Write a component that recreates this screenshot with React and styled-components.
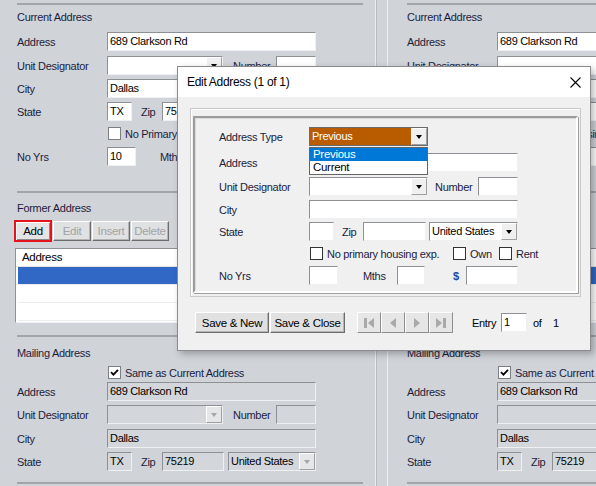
import React from 'react';
import styled, { createGlobalStyle } from 'styled-components';

const GlobalStyle = createGlobalStyle`
  html, body {
    margin: 0;
    padding: 0;
  }
  body {
    background: #d0d4d9;
    font-family: "Liberation Sans", Arial, sans-serif;
    font-size: 11px;
    letter-spacing: -0.3px;
    color: #1c1c3c;
  }
`;

const Screen = styled.div`
  position: relative;
  display: flex;
  width: 596px;
  height: 486px;
  overflow: hidden;
`;

const Column = styled.div`
  flex: 0 0 375px;
  box-sizing: border-box;
  padding-left: 17px;
  display: flex;
  flex-direction: column;
`;

const ColumnGap = styled.div`
  flex: 0 0 13px;
  box-sizing: border-box;
  margin-right: 2px;
  border-left: 1px solid #eceef1;
  border-right: 1px solid #eceef1;
  box-shadow: inset 1px 0 0 #b9bdc2;
`;

const Rule = styled.div`
  flex-shrink: 0;
  width: 346px;
  height: 2px;
  margin-top: ${(p) => p.$mt}px;
  background: #a2a5a9;
`;

const SectionTitle = styled.div`
  flex-shrink: 0;
  height: 14px;
  line-height: 14px;
  margin-top: ${(p) => p.$mt}px;
  white-space: nowrap;
`;

const FieldRow = styled.div`
  flex-shrink: 0;
  position: relative;
  display: flex;
  align-items: center;
  height: ${(p) => p.$h || 19}px;
  margin-top: ${(p) => p.$mt}px;
  white-space: nowrap;
`;

const Label = styled.span`
  flex-shrink: 0;
  width: ${(p) => p.$w || 90}px;
  margin-left: ${(p) => p.$ml || 0}px;
  color: ${(p) => p.$color || 'inherit'};
  font-weight: ${(p) => (p.$bold ? 'bold' : 'normal')};
`;

const TextBox = styled.div`
  flex-shrink: 0;
  box-sizing: border-box;
  width: ${(p) => p.$w}px;
  height: 19px;
  margin-left: ${(p) => p.$ml || 0}px;
  padding: 0 2px;
  line-height: 17px;
  color: #000;
  background: ${(p) => (p.$disabled ? '#d3d6da' : '#fff')};
  border: 1px solid;
  border-color: #8d9095 #eef0f2 #eef0f2 #8d9095;
  overflow: hidden;
`;

const Combo = styled(TextBox)`
  position: relative;
  display: flex;
  padding: 0 0 0 2px;
  overflow: visible;
  background: ${(p) => (p.$accent ? '#b95c00' : p.$disabled ? '#d3d6da' : '#fff')};
  color: ${(p) => (p.$accent ? '#fff' : '#000')};
  border-color: ${(p) => (p.$accent ? '#6b6b6b' : '#8d9095 #eef0f2 #eef0f2 #8d9095')};
`;

const ComboText = styled.span`
  flex: 1;
  overflow: hidden;
`;

const DropButton = styled.span`
  flex: 0 0 16px;
  box-sizing: border-box;
  display: flex;
  align-items: center;
  justify-content: center;
  background: ${(p) => (p.$disabled ? '#e4e6e8' : '#f0f0f0')};
  border: 1px solid;
  border-color: #ffffff #a0a0a0 #a0a0a0 #ffffff;

  &::after {
    content: '';
    border-left: 3.5px solid transparent;
    border-right: 3.5px solid transparent;
    border-top: 4px solid ${(p) => (p.$disabled ? '#a6a6a6' : '#000')};
  }
`;

const DropList = styled.div`
  position: absolute;
  top: 19px;
  left: -1px;
  right: -1px;
  box-sizing: border-box;
  border: 1px solid #646464;
  background: #fff;
  z-index: 2;
`;

const DropItem = styled.div`
  height: 13px;
  line-height: 13px;
  padding-left: 3px;
  color: ${(p) => (p.$active ? '#fff' : '#000')};
  background: ${(p) => (p.$active ? '#0078d7' : '#fff')};
  font-size: 11.5px;
`;

const CheckBox = styled.span`
  flex-shrink: 0;
  box-sizing: border-box;
  display: flex;
  align-items: center;
  justify-content: center;
  width: 13px;
  height: 13px;
  margin-left: ${(p) => p.$ml || 0}px;
  background: #fff;
  border: 1px solid ${(p) => p.$edge || '#333'};
`;

const CheckText = styled.span`
  flex-shrink: 0;
  width: ${(p) => (p.$w ? `${p.$w}px` : 'auto')};
  margin-left: 4px;
`;

const ClassicButton = styled.button`
  flex-shrink: 0;
  box-sizing: border-box;
  width: ${(p) => p.$w}px;
  height: ${(p) => p.$h || 20}px;
  margin-left: ${(p) => p.$ml || 0}px;
  padding: 0;
  font: inherit;
  font-size: 11.5px;
  letter-spacing: inherit;
  color: ${(p) => (p.$disabled ? '#a3a3a3' : '#000')};
  background: ${(p) => (p.$disabled ? '#dfe1e3' : '#e1e1e1')};
  border: 1px solid;
  border-color: #ffffff #6d6d6d #6d6d6d #ffffff;
  box-shadow: inset -1px -1px 0 #b4b4b4;

  &.flagged {
    border: 2px solid #e3141e;
    box-shadow: inset 1px 1px 0 #fff, inset -1px -1px 0 #8a8a8a;
    background: #e4e4e4;
  }
`;

const ButtonRow = styled.div`
  flex-shrink: 0;
  display: flex;
  align-items: center;
  height: 22px;
  margin-top: ${(p) => p.$mt}px;
  margin-left: -3px;
`;

const ListBox = styled.div`
  flex-shrink: 0;
  box-sizing: border-box;
  width: 352px;
  height: 75px;
  margin-top: ${(p) => p.$mt}px;
  margin-left: -2px;
  background: #fff;
  border: 1px solid;
  border-color: #8d9095 #eef0f2 #eef0f2 #8d9095;
`;

const ListHeader = styled.div`
  height: 17px;
  line-height: 17px;
  padding-left: 6px;
  font-size: 11.5px;
  color: #000;
  border-bottom: 1px solid #e3e3e3;
`;

const ListRow = styled.div`
  height: 17px;
  margin-left: 2px;
  background: ${(p) => (p.$selected ? '#3168c6' : '#fff')};
  border-bottom: 1px solid #ececec;
`;

/* dialog */

const Dialog = styled.div`
  position: absolute;
  left: 177px;
  top: 66px;
  width: 414px;
  height: 285px;
  box-sizing: border-box;
  display: flex;
  flex-direction: column;
  background: #f0f0f0;
  border: 1px solid #8c8c8c;
  box-shadow: 3px 3px 7px rgba(0, 0, 0, 0.28);
  color: #1c1c3c;
`;

const TitleBar = styled.div`
  flex: 0 0 30px;
  display: flex;
  align-items: center;
  justify-content: space-between;
  padding: 0 9px 0 9px;
  background: #fff;
  color: #000;
  font-size: 12px;
`;

const DialogBody = styled.div`
  flex: 1;
  padding: 11px 9px 0 12px;
`;

const OuterGroup = styled.div`
  box-sizing: border-box;
  display: flex;
  height: 189px;
  padding: 7px 2px 3px 2px;
  border: 1px solid #c9c9c9;
  box-shadow: inset 1px 1px 0 #fff;
`;

const InnerGroup = styled.div`
  flex: 1;
  display: flex;
  flex-direction: column;
  padding: 9px 0 0 24px;
  border: 2px solid;
  border-color: #9c9c9c #ffffff #ffffff #9c9c9c;
  box-shadow: inset 1px 1px 0 #dcdcdc, 1px 1px 0 #a0a0a0;
`;

const DialogBar = styled.div`
  display: flex;
  align-items: center;
  height: 21px;
  margin-top: 15px;
  padding-left: 5px;
  color: #000;
`;

const NavGroup = styled.div`
  display: flex;
  margin-left: 12px;
`;

const NavButton = styled.span`
  box-sizing: border-box;
  display: flex;
  align-items: center;
  justify-content: center;
  width: 24px;
  height: 21px;
  background: #e6e6e6;
  border: 1px solid;
  border-color: #ffffff #8e8e8e #8e8e8e #ffffff;
`;

const Check = () => (
  <svg width="9" height="9" viewBox="0 0 9 9">
    <path d="M1 4.2 L3.4 6.6 L8 1.8" fill="none" stroke="#000" strokeWidth="1.8" />
  </svg>
);

const NavIcon = ({ kind }) => {
  const shapes = {
    first: (
      <>
        <rect x="1" y="1" width="3" height="10" />
        <path d="M11 1 L5 6 L11 11 Z" />
      </>
    ),
    prev: <path d="M9 1 L3 6 L9 11 Z" />,
    next: <path d="M3 1 L9 6 L3 11 Z" />,
    last: (
      <>
        <path d="M1 1 L7 6 L1 11 Z" />
        <rect x="8" y="1" width="3" height="10" />
      </>
    ),
  };
  return (
    <svg width="12" height="12" viewBox="0 0 12 12" fill="#a9a9a9">
      {shapes[kind]}
    </svg>
  );
};

const CloseIcon = () => (
  <svg width="11" height="11" viewBox="0 0 11 11">
    <path d="M0.5 0.5 L10.5 10.5 M10.5 0.5 L0.5 10.5" stroke="#000" strokeWidth="1.1" />
  </svg>
);

const AddressColumn = () => (
  <Column>
    <Rule $mt={3} />
    <SectionTitle $mt={5}>Current Address</SectionTitle>
    <FieldRow $mt={8}>
      <Label>Address</Label>
      <TextBox $w={209}>689 Clarkson Rd</TextBox>
    </FieldRow>
    <FieldRow $mt={5}>
      <Label>Unit Designator</Label>
      <Combo $w={116}>
        <ComboText />
        <DropButton />
      </Combo>
      <Label $ml={10} $w={43}>Number</Label>
      <TextBox $w={40} />
    </FieldRow>
    <FieldRow $mt={4}>
      <Label>City</Label>
      <TextBox $w={209}>Dallas</TextBox>
    </FieldRow>
    <FieldRow $mt={4}>
      <Label>State</Label>
      <TextBox $w={25}>TX</TextBox>
      <Label $ml={9} $w={21}>Zip</Label>
      <TextBox $w={62}>75219</TextBox>
      <Combo $w={88} $ml={4}>
        <ComboText>United States</ComboText>
        <DropButton />
      </Combo>
    </FieldRow>
    <FieldRow $mt={6} $h={13}>
      <CheckBox $ml={91} $edge="#7b7e82" />
      <CheckText>No Primary housing exp.</CheckText>
    </FieldRow>
    <FieldRow $mt={7}>
      <Label>No Yrs</Label>
      <TextBox $w={29}>10</TextBox>
      <Label $ml={24} $w={34}>Mths</Label>
      <TextBox $w={28} />
    </FieldRow>

    <Rule $mt={25} />
    <SectionTitle $mt={8}>Former Address</SectionTitle>
    <ButtonRow $mt={5}>
      <ClassicButton className="flagged" $w={38} $h={22}>Add</ClassicButton>
      <ClassicButton $w={38} $ml={1} $disabled>Edit</ClassicButton>
      <ClassicButton $w={38} $ml={1} $disabled>Insert</ClassicButton>
      <ClassicButton $w={38} $ml={1} $disabled>Delete</ClassicButton>
    </ButtonRow>
    <ListBox $mt={6}>
      <ListHeader>Address</ListHeader>
      <ListRow $selected />
      <ListRow />
      <ListRow />
    </ListBox>

    <Rule $mt={12} />
    <SectionTitle $mt={9}>Mailing Address</SectionTitle>
    <FieldRow $mt={6} $h={13}>
      <CheckBox $ml={91} $edge="#7b7e82">
        <Check />
      </CheckBox>
      <CheckText>Same as Current Address</CheckText>
    </FieldRow>
    <FieldRow $mt={3}>
      <Label>Address</Label>
      <TextBox $w={209} $disabled>689 Clarkson Rd</TextBox>
    </FieldRow>
    <FieldRow $mt={4}>
      <Label>Unit Designator</Label>
      <Combo $w={116} $disabled>
        <ComboText />
        <DropButton $disabled />
      </Combo>
      <Label $ml={10} $w={43}>Number</Label>
      <TextBox $w={40} $disabled />
    </FieldRow>
    <FieldRow $mt={5}>
      <Label>City</Label>
      <TextBox $w={209} $disabled>Dallas</TextBox>
    </FieldRow>
    <FieldRow $mt={4}>
      <Label>State</Label>
      <TextBox $w={25} $disabled>TX</TextBox>
      <Label $ml={9} $w={21}>Zip</Label>
      <TextBox $w={62} $disabled>75219</TextBox>
      <Combo $w={88} $ml={4} $disabled>
        <ComboText>United States</ComboText>
        <DropButton $disabled />
      </Combo>
    </FieldRow>
    <Rule $mt={11} />
  </Column>
);

const EditAddressDialog = () => (
  <Dialog>
    <TitleBar>
      <span>Edit Address (1 of 1)</span>
      <CloseIcon />
    </TitleBar>
    <DialogBody>
      <OuterGroup>
        <InnerGroup>
          <FieldRow $mt={0}>
            <Label>Address Type</Label>
            <Combo $w={119} $accent>
              <ComboText>Previous</ComboText>
              <DropButton />
              <DropList>
                <DropItem $active>Previous</DropItem>
                <DropItem>Current</DropItem>
              </DropList>
            </Combo>
          </FieldRow>
          <FieldRow $mt={7}>
            <Label>Address</Label>
            <TextBox $w={209} />
          </FieldRow>
          <FieldRow $mt={5}>
            <Label>Unit Designator</Label>
            <Combo $w={119}>
              <ComboText />
              <DropButton />
            </Combo>
            <Label $ml={7} $w={43}>Number</Label>
            <TextBox $w={40} />
          </FieldRow>
          <FieldRow $mt={4}>
            <Label>City</Label>
            <TextBox $w={209} />
          </FieldRow>
          <FieldRow $mt={3}>
            <Label>State</Label>
            <TextBox $w={25} />
            <Label $ml={8} $w={21}>Zip</Label>
            <TextBox $w={63} />
            <Combo $w={89} $ml={3}>
              <ComboText>United States</ComboText>
              <DropButton />
            </Combo>
          </FieldRow>
          <FieldRow $mt={6} $h={13}>
            <CheckBox $ml={91} />
            <CheckText $w={126}>No primary housing exp.</CheckText>
            <CheckBox />
            <CheckText $w={29}>Own</CheckText>
            <CheckBox />
            <CheckText>Rent</CheckText>
          </FieldRow>
          <FieldRow $mt={6}>
            <Label>No Yrs</Label>
            <TextBox $w={29} />
            <Label $ml={25} $w={34}>Mths</Label>
            <TextBox $w={28} />
            <Label $ml={28} $w={13} $color="#2447a8" $bold>$</Label>
            <TextBox $w={52} />
          </FieldRow>
        </InnerGroup>
      </OuterGroup>
      <DialogBar>
        <ClassicButton $w={74} $h={21}>Save &amp; New</ClassicButton>
        <ClassicButton $w={75} $h={21} $ml={1}>Save &amp; Close</ClassicButton>
        <NavGroup>
          <NavButton><NavIcon kind="first" /></NavButton>
          <NavButton><NavIcon kind="prev" /></NavButton>
          <NavButton><NavIcon kind="next" /></NavButton>
          <NavButton><NavIcon kind="last" /></NavButton>
        </NavGroup>
        <Label $ml={19} $w={29}>Entry</Label>
        <TextBox $w={26}>1</TextBox>
        <Label $ml={6} $w={20}>of</Label>
        <span>1</span>
      </DialogBar>
    </DialogBody>
  </Dialog>
);

const App = () => (
  <>
    <GlobalStyle />
    <Screen>
      <AddressColumn />
      <ColumnGap />
      <AddressColumn />
      <EditAddressDialog />
    </Screen>
  </>
);

export default App;
